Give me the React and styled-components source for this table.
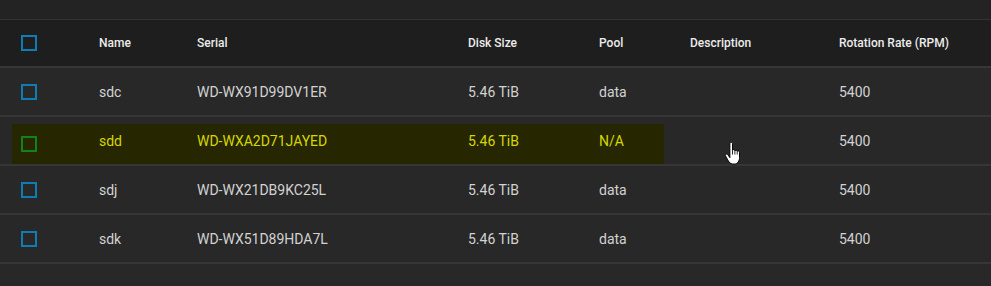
import React from "react";
import styled, { createGlobalStyle, css } from "styled-components";

const GlobalStyle = createGlobalStyle`
  html, body {
    margin: 0;
    padding: 0;
    background: #282828;
    font-family: Roboto, "Noto Sans", sans-serif;
  }
`;

const Page = styled.div`
  width: 991px;
  height: 286px;
  background: #282828;
  overflow: hidden;
`;

const TopBand = styled.div`
  height: 19px;
  background: #232323;
  border-bottom: 1px solid #333333;
`;

const cols = "78px 98px 271px 131px 91px 149px 1fr";

const HeaderRow = styled.div`
  display: grid;
  grid-template-columns: ${cols};
  align-items: center;
  height: 46px;
  padding-left: 21px;
  background: #1e1e1e;
  border-bottom: 2px solid #363636;
`;

const HeadCell = styled.div`
  font-size: 12px;
  font-weight: 500;
  color: #ececec;
  white-space: nowrap;
`;

const Row = styled.div`
  position: relative;
  display: grid;
  grid-template-columns: ${cols};
  align-items: center;
  height: 47px;
  padding-left: 21px;
  background: #282828;
  border-bottom: 2px solid #363636;

  ${({ $hot }) =>
    $hot &&
    css`
      &::before {
        content: "";
        position: absolute;
        left: 12px;
        top: 7px;
        bottom: 0;
        width: 652px;
        background: #262600;
      }
    `}
`;

const Cell = styled.div`
  position: relative;
  font-size: 14px;
  color: ${({ $hot }) => ($hot ? "#d6d600" : "#d2d2d2")};
  white-space: nowrap;
`;

const Check = styled.div`
  position: relative;
  width: 12px;
  height: 12px;
  border: 2px solid ${({ $hot }) => ($hot ? "#118411" : "#0e7db3")};
  ${({ $offset }) => $offset && "margin-top: 7px;"}
`;

const Cursor = styled.svg`
  position: absolute;
  left: 724px;
  top: 25px;
  width: 17px;
  height: 23px;
  pointer-events: none;
`;

const disks = [
  { name: "sdc", serial: "WD-WX91D99DV1ER", size: "5.46 TiB", pool: "data", rpm: "5400" },
  { name: "sdd", serial: "WD-WXA2D71JAYED", size: "5.46 TiB", pool: "N/A", rpm: "5400", hot: true },
  { name: "sdj", serial: "WD-WX21DB9KC25L", size: "5.46 TiB", pool: "data", rpm: "5400" },
  { name: "sdk", serial: "WD-WX51D89HDA7L", size: "5.46 TiB", pool: "data", rpm: "5400" },
];

const HandCursor = () => (
  <Cursor viewBox="0 0 15 22">
    <path
      d="M5 1.5C5 0.7 5.6 0.3 6.3 0.3C7 0.3 7.5 0.8 7.5 1.5V8C7.8 7.5 8.2 7.3 8.7 7.3C9.3 7.3 9.8 7.8 9.8 8.5C10.1 8 10.5 7.8 11 7.8C11.6 7.8 12 8.3 12 9C12.3 8.6 12.7 8.5 13.1 8.5C13.7 8.5 14.2 9 14.2 9.7V15C14.2 18 12.5 21 9.5 21H7.5C5.5 21 4.5 19.5 3.5 18L0.9 13.5C0.5 12.8 0.7 12 1.3 11.7C2 11.4 2.7 11.7 3.1 12.3L5 15Z"
      fill="#ffffff"
      stroke="#000000"
      strokeWidth="0.9"
    />
    <path d="M7.5 8V12M9.8 8.5V12M12 9V12" stroke="#000000" strokeWidth="0.8" />
  </Cursor>
);

const App = () => {
  return (
    <Page>
      <GlobalStyle />
      <TopBand />
      <HeaderRow>
        <Check />
        <HeadCell>Name</HeadCell>
        <HeadCell>Serial</HeadCell>
        <HeadCell>Disk Size</HeadCell>
        <HeadCell>Pool</HeadCell>
        <HeadCell>Description</HeadCell>
        <HeadCell>Rotation Rate (RPM)</HeadCell>
      </HeaderRow>
      {disks.map((d) => (
        <Row key={d.name} $hot={d.hot}>
          <Check $hot={d.hot} $offset={d.hot} />
          <Cell $hot={d.hot}>{d.name}</Cell>
          <Cell $hot={d.hot}>{d.serial}</Cell>
          <Cell $hot={d.hot}>{d.size}</Cell>
          <Cell $hot={d.hot}>{d.pool}</Cell>
          <Cell />
          <Cell>{d.rpm}</Cell>
          {d.hot && <HandCursor />}
        </Row>
      ))}
    </Page>
  );
};

export default App;
